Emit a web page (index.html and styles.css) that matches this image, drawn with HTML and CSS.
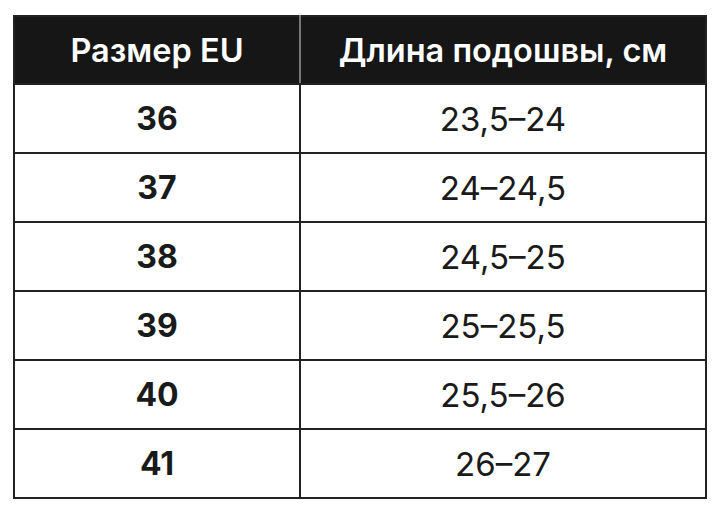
FILE: index.html
```html
<!DOCTYPE html>
<html lang="ru">
<head>
<meta charset="utf-8">
<link rel="stylesheet" href="styles.css">
</head>
<body>
<table class="sizes">
  <thead>
    <tr><th class="c1">Размер EU</th><th class="c2">Длина подошвы, см</th></tr>
  </thead>
  <tbody>
    <tr><td class="size">36</td><td class="len">23,5–24</td></tr>
    <tr><td class="size">37</td><td class="len">24–24,5</td></tr>
    <tr><td class="size">38</td><td class="len">24,5–25</td></tr>
    <tr><td class="size">39</td><td class="len">25–25,5</td></tr>
    <tr><td class="size">40</td><td class="len">25,5–26</td></tr>
    <tr><td class="size">41</td><td class="len">26–27</td></tr>
  </tbody>
</table>
</body>
</html>
```
FILE: styles.css
```css
html, body { margin: 0; padding: 0; background: #fff; }
body { padding: 15px 13px 0 13px; font-family: Inter, "Noto Sans", sans-serif; color: #1a1a1a; }
.sizes {
  width: 694px;
  border-collapse: collapse;
  table-layout: fixed;
}
.sizes th, .sizes td {
  border: 2px solid #222;
  text-align: center;
  padding: 0;
}
.sizes th {
  background: #161616;
  color: #fff;
  height: 66px;
  font-size: 32.5px;
  font-weight: 600;
}
.sizes th.c1 { border-right: 2px solid #777; }
.c1 { width: 284px; }
.sizes td { height: 67px; font-size: 33px; }
.size { font-weight: 700; font-size: 32px; }
.sizes td.size { font-size: 32px; }
.len { font-weight: 400; }
```
